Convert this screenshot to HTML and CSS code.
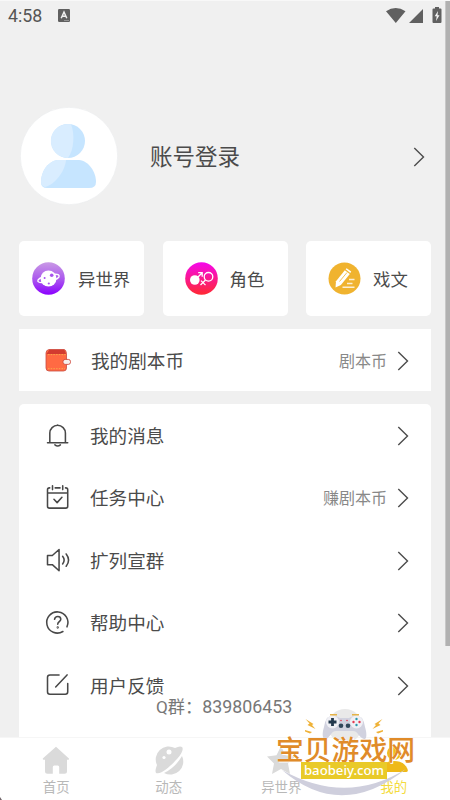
FILE: index.html
```html
<!DOCTYPE html>
<html lang="zh-CN">
<head>
<meta charset="utf-8">
<title>我的</title>
<link rel="stylesheet" href="styles.css">
</head>
<body>
<svg class="defs" width="0" height="0"><symbol id="chevron" viewBox="0 0 12 20"><path d="M1.3 1l9.2 9-9.2 9" fill="none" stroke="#4c4c4c" stroke-width="1.4"/></symbol></svg>
<div class="app">
  <header class="status">
    <span class="time">4:58</span>
    <svg class="keyboard" viewBox="0 0 12 13"><rect width="12" height="13" rx="1.2" fill="#606060"/><path d="M3.2 9.2L6 3l2.8 6.2M4.2 7.2h3.6" fill="none" stroke="#f0f0f0" stroke-width="1.5"/><path d="M6 11.5h5" stroke="#aaa" stroke-width=".7"/></svg>
    <svg class="signals" viewBox="0 0 56 18"><path d="M0 4.2Q9.7-2.3 19.5 4.2L9.8 16zM23 16h14V2zM49 1.500h4V0h-4zM47.500 1.500h7q1 0 1 1V15q0 1-1 1h-7q-1 0-1-1V2.500q0-1 1-1z" fill="#606060"/><path d="M52 4l-3.300 5.200h2L50 14l3.500-5.700h-2z" fill="#f4f4f4"/></svg>
  </header>

  <main class="content">
    <section class="profile">
      <svg class="avatar" viewBox="0 0 98 98"><circle cx="49" cy="49" r="48.700" fill="#fff" stroke="#e9ebed" stroke-width=".6"/><circle cx="48" cy="34" r="17" fill="#c6e5ff"/><path d="M51 17.300A17 17 0 1 0 48 51C54 43 55 27 51 17.300z" fill="#d9edff"/><path d="M37 53h22c10 1 17 12 17 22q0 6-7 6H27q-6 0-6-6c0-10 6-20 16-22z" fill="#c6e5ff"/><path d="M46 53h-9c-10 2-16 12-16 22q0 4 4 5C34 78 45 65 46 53z" fill="#d9edff"/></svg>
      <h1 class="login">账号登录</h1>
      <svg class="chevron"><use href="#chevron"/></svg>
    </section>

    <section class="shortcuts">
      <a class="shortcut">
        <svg class="disc" viewBox="0 0 33 33"><defs><linearGradient id="violet" x2="0" y2="1"><stop stop-color="#c99ae5"/><stop offset=".55" stop-color="#a953ee"/><stop offset="1" stop-color="#8b00ff"/></linearGradient></defs><circle cx="16.500" cy="16.500" r="16.300" fill="url(#violet)"/><ellipse cx="16.500" cy="16.500" rx="11" ry="3.200" transform="rotate(-14 16.500 16.500)" fill="none" stroke="#fff" stroke-width="1.300"/><circle cx="16.500" cy="16.500" r="8" fill="#fff"/><g fill="#a953ee"><circle cx="19.700" cy="13.300" r="1.800"/><circle cx="12.600" cy="16" r="1"/><circle cx="16.800" cy="21.500" r="1.100"/></g></svg>
        <span>异世界</span>
      </a>
      <a class="shortcut two">
        <svg class="disc" viewBox="0 0 33 33"><defs><linearGradient id="pink" x2="0" y2="1"><stop stop-color="#f507ed"/><stop offset="1" stop-color="#ff2932"/></linearGradient></defs><circle cx="16.500" cy="16.500" r="16.300" fill="url(#pink)"/><circle cx="9.800" cy="18" r="4.800" fill="#fff"/><g fill="none" stroke="#fff" stroke-width="1.300"><path d="M12 16l5.200-5.300M13.200 10.700h4v4M20.500 18l-5 5M16 18.600l4.500 4.500"/><circle cx="23.500" cy="14.800" r="4.300"/></g></svg>
        <span>角色</span>
      </a>
      <a class="shortcut two">
        <svg class="disc" viewBox="0 0 33 33"><circle cx="16.500" cy="16.500" r="16" fill="#f0b32f"/><path d="M8 19.200l8.800-11 5 3.800-8.900 11-5.400 2.600z" fill="#fff"/><path d="M17.600 7.300l1-1.100 4.600 3.400-.9 1.400z" fill="#fff"/><path d="M11.500 19.500l7.500-9" stroke="#f0b32f" stroke-width=".8"/><path d="M21 17.500h5.500M19 21.500h5.500M14.500 25.300h12" stroke="#fff" stroke-width="1.400" opacity=".8"/></svg>
        <span>戏文</span>
      </a>
    </section>

    <section class="wallet row">
      <svg class="icon" viewBox="0 0 26 26"><path d="M1 5q0-3 3-3.500h15q2 0 2.500 4V20q0 3-3 3H4q-3 0-3-3z" fill="#ff6a43" stroke="#c84c42" stroke-width=".8"/><path d="M1.500 6l2.800-4.300h15L21 6z" fill="#d23b30"/><path d="M3 6.600h18M3 20.700h17" stroke="#f7b84e" stroke-width=".8" stroke-dasharray="1.500 1.200"/><rect x="18" y="11.400" width="7.500" height="5" rx="2.200" fill="#f6efec" stroke="#d04b3d" stroke-width=".9"/></svg>
      <span class="label">我的剧本币</span><span class="note">剧本币</span><svg class="chevron"><use href="#chevron"/></svg>
    </section>

    <section class="menu">
      <div class="row">
        <svg class="icon line" viewBox="-.6 0 27 27"><path d="M2 20.500h21M4.400 20.200V10.500a8.100 8.100 0 0 1 16.200 0v9.700M9.700 22.700q2.800 2.300 5.700 0M12.500 2v.3"/></svg>
        <span class="label">我的消息</span><svg class="chevron"><use href="#chevron"/></svg>
      </div>
      <div class="row">
        <svg class="icon line" viewBox="-.6 0 27 27"><path d="M4.300 3H4q-2 0-2 2v17q0 2 2 2h17q2 0 2-2V5q0-2-2-2h-.3M10 3h5M2 8.300h21M7.200.8v4M17.800.8v4M8.700 14.800l3.300 3.500 5-5.500"/></svg>
        <span class="label">任务中心</span><span class="note">赚剧本币</span><svg class="chevron"><use href="#chevron"/></svg>
      </div>
      <div class="row">
        <svg class="icon line" viewBox="-.6 0 27 27"><path d="M2 7.800h5l7-6.200v22l-7-6.300H2zM17.700 8.600q3.200 4 0 8M21.400 6.200q5 6.400 0 12.800"/></svg>
        <span class="label">扩列宣群</span><svg class="chevron"><use href="#chevron"/></svg>
      </div>
      <div class="row">
        <svg class="icon line" viewBox="-.6 0 27 27"><path d="M18 22.300A11 11 0 1 1 22.200 17.500M9.300 9.700q.4-3 3.400-3t3.100 2.800c0 2.300-3.200 2.800-3.200 5.200"/><circle cx="12.600" cy="18.200" r=".4"/></svg>
        <span class="label">帮助中心</span><svg class="chevron"><use href="#chevron"/></svg>
      </div>
      <div class="row">
        <svg class="icon line" viewBox="-.6 0 27 27"><path d="M14 2H4.500Q2 2 2 4.500v15Q2 22 4.500 22h16q2.500 0 2.500-2.500V11M10.500 14.500L22.300 2"/></svg>
        <span class="label">用户反馈</span><svg class="chevron"><use href="#chevron"/></svg>
      </div>
    </section>
  </main>

  <nav class="tabs">
    <a><svg viewBox="0 0 28 28"><path d="M14 .8L1 12.200q-.8 1.300.8 1.500H3v11.500q0 2.500 2.500 2.500h5.300V21q0-1.500 1.500-1.500h3.400q1.500 0 1.500 1.500v6.700h5.300q2.500 0 2.500-2.500V13.700h1.500q1.200-.3.200-1.500z"/></svg><span>首页</span></a>
    <a><svg viewBox="0 0 28 28"><path d="M2 19A13 13 0 0 1 20 2q5-2.500 7-1c2 2-.5 7-5 12S7.500 28 2.200 27.300C-.3 27 .3 23.500 2 19z"/><path d="M27 10A13 13 0 0 1 9 27q11-5 18-17z"/><g fill="#fff"><circle cx="14" cy="6" r="2.500"/><circle cx="9" cy="11.500" r="1.600"/></g></svg><span>动态</span></a>
    <a><svg viewBox="0 0 28 28"><path d="M14 0l4.500 9.300 9.500 1.200-7 7 2 10.500-9-5-9 5 2-10.500-7-7 9.500-1.200z"/></svg><span>异世界</span></a>
    <a class="active"><svg viewBox="0 0 28 28"><circle cx="14" cy="7" r="7"/><path d="M2 26q-2.500 0-1.500-3C3 17.500 7 15 14 15s11 2.500 13.500 8q1 3-1.500 3z"/></svg><span>我的</span></a>
  </nav>

  <p class="group">Q群：<span>839806453</span></p>
  <i class="scrollbar"></i>
  <i class="corner"></i>

  <div class="brand">
    <svg class="art" viewBox="0 0 150 83">
      <circle cx="73" cy="9" r="17" fill="#e9e9e9"/>
      <g fill="#efb238"><path d="M33.500 2l8 5-1.500 1 3.500 4-8-4 2-1.500zM33 13l7 2-2 1.500-5-2zM110.500 2l-8 5 1.500 1-3.500 4 8-4-2-1.500zM111 13l-7 2 2 1.500 5-2z"/></g>
      <path d="M55 1q5-4 11-1l2 1h9l2-1q6-3 11 1 2 3 3 9c2 6 2 13-1 12-5-1-6-8-11-8H64c-5 0-6 7-10 8-4 1-4-6-2-12q1-6 3-9z" fill="#d1d2df"/>
      <circle cx="60.500" cy="5" r="6.500" fill="#f0f0f5"/><circle cx="84.500" cy="5" r="6.500" fill="#f0f0f5"/>
      <path d="M56.500 5h8M60.500 1v8" stroke="#23394d" stroke-width="2.800"/>
      <g fill="#31475a"><circle cx="69" cy="8.800" r="2.300"/><circle cx="76" cy="8.800" r="2.300"/></g>
      <path d="M58-2.300h7M80-2.300h7" stroke="#e5b348" stroke-width="1.500"/>
      <g fill="#e5384f"><circle cx="81.500" cy="5" r="1.200"/><circle cx="87.500" cy="5" r="1.200"/><circle cx="69" cy="3.500" r=".8"/><circle cx="75" cy="3.500" r=".8"/></g>
      <g fill="#2a98ad"><circle cx="84.500" cy="2" r="1.200"/><circle cx="84.500" cy="8" r="1.200"/></g>
      <path d="M10 53Q69 104 134 52Q74 89 10 53z" fill="#cfcfdd"/>
    </svg>
    <strong class="name">宝贝游戏网</strong>
    <span class="domain">baobeiy.com</span>
  </div>
</div>
</body>
</html>
```
FILE: styles.css
```css
* { box-sizing: border-box; }
body { margin: 0; background: #f0f0f0; color: #4b4b4b; font-family: "Noto Sans CJK SC", sans-serif; }
.defs { position: absolute; }
.app { position: relative; width: 450px; height: 800px; overflow: hidden; display: flex; flex-direction: column; border-top: 1px solid #f8f8f8; }
svg { display: block; flex: none; overflow: visible; }
.status { height: 29px; padding: 0 8px; display: flex; align-items: center; }
.time { width: 50px; font: 17.8px/29px Roboto, sans-serif; color: #555; }
.keyboard { width: 12px; height: 13px; }
.signals { width: 56px; height: 18px; margin-left: auto; }
.content { flex: 1; min-height: 0; padding: 77px 19px 0; overflow: hidden; }
.profile { height: 98px; display: flex; align-items: center; padding: 0 6px 0 1px; }
.avatar { width: 98px; height: 98px; margin-right: 32px; }
.login { margin: 0; font-size: 22.5px; line-height: 30px; font-weight: 400; padding-bottom: 2px; }
.chevron { width: 12px; height: 20px; margin-left: auto; }
.profile .chevron, .row .chevron { margin-top: 1px; }
.shortcuts { margin-top: 36px; display: grid; grid-template-columns: repeat(3, 125px); justify-content: space-between; }
.shortcut { height: 75px; background: #fff; border-radius: 5px; display: flex; align-items: center; padding-left: 13px; gap: 13px; font-size: 17.4px; }
.two { padding-left: 22px; gap: 12px; }
.disc { width: 33px; height: 33px; }
.row { height: 62.5px; display: flex; align-items: center; padding: 0 22px 0 26px; font-size: 18.6px; }
.wallet { height: 62px; margin: 13px 0; background: #fff; }
.icon { width: 26px; height: 26px; margin: 1px 19px 0 0; }
.wallet .icon { margin-right: 20px; }
.label { padding-bottom: 2px; }
.line { fill: none; stroke: #484848; stroke-width: 1.6; stroke-linecap: round; stroke-linejoin: round; }
.note { margin-left: auto; color: #888; font-size: 16px; padding-bottom: 1px; }
.note + .chevron { margin-left: 10px; }
.menu { height: 340px; background: #fff; border-radius: 5px 5px 0 0; }
.tabs { height: 63px; flex: none; background: #fff; border-top: 1px solid #f6f6f6; display: grid; grid-template-columns: repeat(4, 1fr); color: #b8b8b8; fill: #dadada; font-size: 13.4px; line-height: 18px; }
.tabs a { display: flex; flex-direction: column; align-items: center; padding-top: 8px; gap: 3px; }
.tabs svg { width: 28px; height: 28px; }
.tabs .active { color: #f4dc3d; fill: #efb918; }
.group { position: absolute; left: 156px; top: 694px; margin: 0; font-size: 17.2px; line-height: 24px; color: #777; white-space: nowrap; font-family: Roboto, "Noto Sans CJK SC", sans-serif; }
.group span { font-size: 17.8px; }
.scrollbar { position: absolute; right: 0; top: -1px; width: 5px; height: 646px; background: #b1b1b1; border-left: 1px solid #c8c8c8; }
.corner { position: absolute; left: 0; bottom: 0; width: 2px; height: 3px; background: #706468; clip-path: polygon(0 0, 100% 100%, 0 100%); }
.brand { position: absolute; left: 272px; top: 716px; width: 150px; height: 83px; display: flex; flex-direction: column; align-items: flex-start; padding: 17px 0 0 4px; }
.art { position: absolute; left: 0; top: 0; width: 150px; height: 83px; }
.name { position: relative; font-size: 27.8px; line-height: 28px; font-weight: 500; color: #e08b29; white-space: nowrap; text-shadow: 0 0 1px #fff, 1px 1px 0 #fff; }
.domain { position: relative; margin-left: 25px; width: 86px; height: 17px; background: #e9ca29; color: #fff; font: 500 13.2px/16px "Noto Sans", sans-serif; text-align: center; }
```
